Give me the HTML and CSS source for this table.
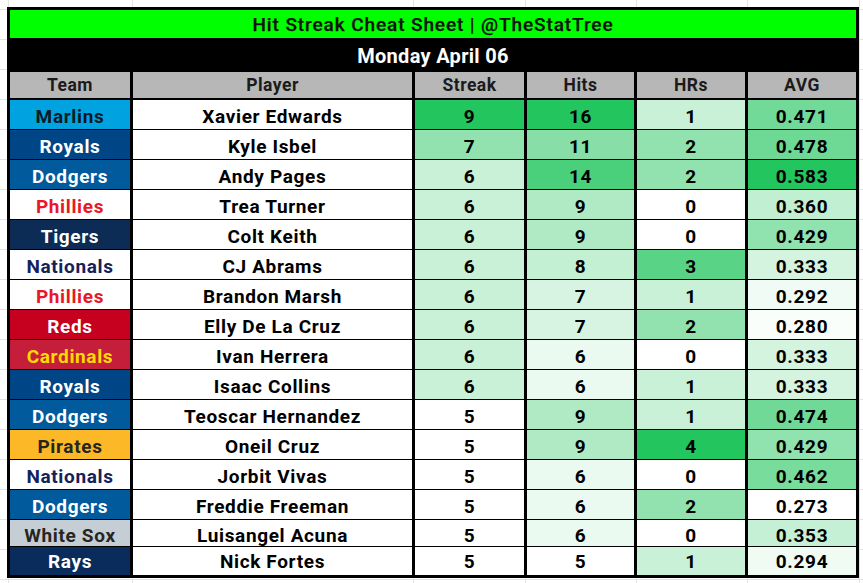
FILE: index.html
```html
<!DOCTYPE html>
<html lang="en">
<head>
<meta charset="utf-8">
<title>Hit Streak Cheat Sheet</title>
<link rel="stylesheet" href="styles.css">
</head>
<body>
<div class="sheet">
  <div class="title">Hit Streak Cheat Sheet | @TheStatTree</div>
  <div class="date">Monday April 06</div>
  <div class="grid">
    <div class="row head">
      <div class="c">Team</div><div class="c">Player</div><div class="c">Streak</div><div class="c">Hits</div><div class="c">HRs</div><div class="c">AVG</div>
    </div>
    <div class="row">
      <div class="c team marlins">Marlins</div><div class="c">Xavier Edwards</div>
      <div class="c" style="background:rgb(34,197,94)">9</div><div class="c" style="background:rgb(34,197,94)">16</div><div class="c" style="background:rgb(200,241,215)">1</div><div class="c" style="background:rgb(114,218,152)">0.471</div>
    </div>
    <div class="row">
      <div class="c team royals">Royals</div><div class="c">Kyle Isbel</div>
      <div class="c" style="background:rgb(145,226,175)">7</div><div class="c" style="background:rgb(135,223,167)">11</div><div class="c" style="background:rgb(145,226,175)">2</div><div class="c" style="background:rgb(109,217,149)">0.478</div>
    </div>
    <div class="row">
      <div class="c team dodgers">Dodgers</div><div class="c">Andy Pages</div>
      <div class="c" style="background:rgb(200,241,215)">6</div><div class="c" style="background:rgb(74,208,123)">14</div><div class="c" style="background:rgb(145,226,175)">2</div><div class="c" style="background:rgb(34,197,94)">0.583</div>
    </div>
    <div class="row">
      <div class="c team phillies">Phillies</div><div class="c">Trea Turner</div>
      <div class="c" style="background:rgb(200,241,215)">6</div><div class="c" style="background:rgb(175,234,196)">9</div><div class="c" style="background:rgb(255,255,255)">0</div><div class="c" style="background:rgb(193,239,210)">0.360</div>
    </div>
    <div class="row">
      <div class="c team tigers">Tigers</div><div class="c">Colt Keith</div>
      <div class="c" style="background:rgb(200,241,215)">6</div><div class="c" style="background:rgb(175,234,196)">9</div><div class="c" style="background:rgb(255,255,255)">0</div><div class="c" style="background:rgb(144,226,174)">0.429</div>
    </div>
    <div class="row">
      <div class="c team nationals">Nationals</div><div class="c">CJ Abrams</div>
      <div class="c" style="background:rgb(200,241,215)">6</div><div class="c" style="background:rgb(195,239,211)">8</div><div class="c" style="background:rgb(89,212,134)">3</div><div class="c" style="background:rgb(212,244,224)">0.333</div>
    </div>
    <div class="row">
      <div class="c team phillies">Phillies</div><div class="c">Brandon Marsh</div>
      <div class="c" style="background:rgb(200,241,215)">6</div><div class="c" style="background:rgb(215,244,226)">7</div><div class="c" style="background:rgb(200,241,215)">1</div><div class="c" style="background:rgb(241,251,245)">0.292</div>
    </div>
    <div class="row">
      <div class="c team reds">Reds</div><div class="c">Elly De La Cruz</div>
      <div class="c" style="background:rgb(200,241,215)">6</div><div class="c" style="background:rgb(215,244,226)">7</div><div class="c" style="background:rgb(145,226,175)">2</div><div class="c" style="background:rgb(250,254,251)">0.280</div>
    </div>
    <div class="row">
      <div class="c team cardinals">Cardinals</div><div class="c">Ivan Herrera</div>
      <div class="c" style="background:rgb(200,241,215)">6</div><div class="c" style="background:rgb(235,250,240)">6</div><div class="c" style="background:rgb(255,255,255)">0</div><div class="c" style="background:rgb(212,244,224)">0.333</div>
    </div>
    <div class="row">
      <div class="c team royals">Royals</div><div class="c">Isaac Collins</div>
      <div class="c" style="background:rgb(200,241,215)">6</div><div class="c" style="background:rgb(235,250,240)">6</div><div class="c" style="background:rgb(200,241,215)">1</div><div class="c" style="background:rgb(212,244,224)">0.333</div>
    </div>
    <div class="row">
      <div class="c team dodgers">Dodgers</div><div class="c">Teoscar Hernandez</div>
      <div class="c" style="background:rgb(255,255,255)">5</div><div class="c" style="background:rgb(175,234,196)">9</div><div class="c" style="background:rgb(200,241,215)">1</div><div class="c" style="background:rgb(112,217,151)">0.474</div>
    </div>
    <div class="row">
      <div class="c team pirates">Pirates</div><div class="c">Oneil Cruz</div>
      <div class="c" style="background:rgb(255,255,255)">5</div><div class="c" style="background:rgb(175,234,196)">9</div><div class="c" style="background:rgb(34,197,94)">4</div><div class="c" style="background:rgb(144,226,174)">0.429</div>
    </div>
    <div class="row">
      <div class="c team nationals">Nationals</div><div class="c">Jorbit Vivas</div>
      <div class="c" style="background:rgb(255,255,255)">5</div><div class="c" style="background:rgb(235,250,240)">6</div><div class="c" style="background:rgb(255,255,255)">0</div><div class="c" style="background:rgb(120,220,157)">0.462</div>
    </div>
    <div class="row">
      <div class="c team dodgers">Dodgers</div><div class="c">Freddie Freeman</div>
      <div class="c" style="background:rgb(255,255,255)">5</div><div class="c" style="background:rgb(235,250,240)">6</div><div class="c" style="background:rgb(145,226,175)">2</div><div class="c" style="background:rgb(255,255,255)">0.273</div>
    </div>
    <div class="row short">
      <div class="c team whitesox">White Sox</div><div class="c">Luisangel Acuna</div>
      <div class="c" style="background:rgb(255,255,255)">5</div><div class="c" style="background:rgb(235,250,240)">6</div><div class="c" style="background:rgb(255,255,255)">0</div><div class="c" style="background:rgb(198,240,214)">0.353</div>
    </div>
    <div class="row last">
      <div class="c team rays">Rays</div><div class="c">Nick Fortes</div>
      <div class="c" style="background:rgb(255,255,255)">5</div><div class="c" style="background:rgb(255,255,255)">5</div><div class="c" style="background:rgb(200,241,215)">1</div><div class="c" style="background:rgb(240,251,244)">0.294</div>
    </div>
  </div>
</div>
</body>
</html>
```
FILE: styles.css
```css
html, body {
  margin: 0;
  padding: 0;
}
body {
  width: 863px;
  height: 583px;
  overflow: hidden;
  font-family: Roboto, "Liberation Sans", sans-serif;
  background-color: #fff;
  background-image:
    linear-gradient(#e3e3e3, #e3e3e3),
    linear-gradient(#e3e3e3, #e3e3e3),
    linear-gradient(#e3e3e3, #e3e3e3),
    linear-gradient(#e3e3e3, #e3e3e3),
    linear-gradient(#e3e3e3, #e3e3e3),
    linear-gradient(#e3e3e3, #e3e3e3),
    linear-gradient(#e3e3e3, #e3e3e3),
    repeating-linear-gradient(to bottom, transparent 0 9px, #e3e3e3 9px 10px, transparent 10px 30px);
  background-size: 1px 100%, 1px 100%, 1px 100%, 1px 100%, 1px 100%, 1px 100%, 1px 100%, 100% 100%;
  background-position: 8px 0, 132px 0, 413px 0, 525px 0, 636px 0, 747px 0, 859px 0, 0 0;
  background-repeat: no-repeat;
}
.sheet {
  box-sizing: border-box;
  width: 852px;
  margin: 7px 0 0 7px;
  border: 3px solid #000;
  background: #000;
}
.title {
  height: 28px;
  box-sizing: border-box;
  padding-top: 4px;
  line-height: 22px;
  background: #00ff00;
  color: #111;
  font-size: 19px;
  font-weight: 500;
  letter-spacing: 0.9px;
  text-align: center;
  -webkit-text-stroke: 0.25px #111;
}
.date {
  height: 34px;
  box-sizing: border-box;
  padding-top: 6px;
  line-height: 24px;
  background: #000;
  color: #fff;
  font-size: 20px;
  font-weight: 700;
  letter-spacing: 0.3px;
  text-align: center;
}
.grid {
  display: grid;
  grid-template-columns: 120px 279px 109px 107px 108px 108px;
  column-gap: 3px;
  row-gap: 1px;
  background: #000;
}
.row {
  display: contents;
}
.c {
  box-sizing: border-box;
  height: 29px;
  padding-top: 4px;
  line-height: 25px;
  background: #fff;
  color: #000;
  font-size: 19px;
  font-weight: 700;
  letter-spacing: 0.65px;
  text-align: center;
  white-space: nowrap;
  overflow: hidden;
}
.head .c {
  height: 26px;
  margin-bottom: 1px;
  padding-top: 3px;
  line-height: 20px;
  background: #b7b7b7;
  color: #1b1b1b;
  font-size: 17.5px;
  letter-spacing: 0.5px;
}
.short .c {
  height: 26px;
  padding-top: 5px;
  line-height: 22px;
}
.last .c {
  height: 28px;
  padding-top: 2px;
}
.marlins { background: #00a3e0; color: #0a1a26; }
.royals { background: #004687; color: #fff; }
.dodgers { background: #005a9c; color: #fff; }
.phillies { background: #fff; color: #e81828; }
.tigers { background: #0c2c56; color: #fff; }
.nationals { background: #fff; color: #14225a; }
.reds { background: #c6011f; color: #fff; }
.cardinals { background: #c41e3a; color: #fedb00; }
.pirates { background: #fdb827; color: #27251f; }
.whitesox { background: #c4ced4; color: #27251f; }
.rays { background: #092c5c; color: #fff; }
```
